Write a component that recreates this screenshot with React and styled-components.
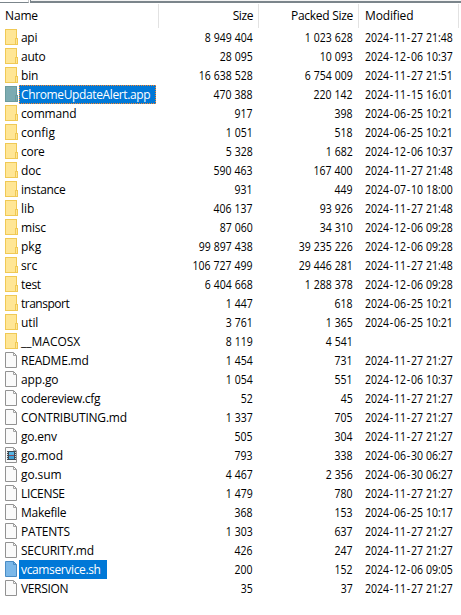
import React from 'react';
import styled, { createGlobalStyle, css } from 'styled-components';

const GlobalStyle = createGlobalStyle`
  * { box-sizing: border-box; }
  body { margin: 0; background: #fff; overflow: hidden; }
`;

const Panel = styled.main`
  width: 461px;
  height: 615px;
  background: #fff;
  color: #000;
  font: 12px/19px "Open Sans", "Noto Sans", sans-serif;
  white-space: nowrap;
`;

const TopEdge = styled.div`
  display: flex;
  height: 4px;
`;

const TabEdge = styled.div`
  width: 29px;
  height: 3px;
  border-right: 1px solid #c8cacc;
  border-bottom: 1px solid #7b858b;
  background: #fff;
`;

const FrameEdge = styled.div`
  flex: 1;
  margin-left: 1px;
  height: 3px;
  border-left: 1px solid #7b858b;
  border-bottom: 2px solid #7b858b;
  background: #f3f3f3;
`;

const grid = css`
  display: grid;
  grid-template-columns: 159px 100px 100px 100px;
`;

const Header = styled.header`
  ${grid}
  height: 24px;
`;

const HeaderCell = styled.div`
  border-right: 1px solid #e2e2e2;
  line-height: 24px;
  text-align: ${(p) => (p.$right ? 'right' : 'left')};
  padding-left: ${(p) => p.$indent || 0}px;
  padding-right: ${(p) => (p.$right ? '5px' : '0')};
  letter-spacing: ${(p) => p.$track || 0}px;
`;

const Row = styled.div`
  ${grid}
  height: 19px;
`;

const NameCell = styled.div`
  display: flex;
  align-items: flex-start;
  padding-left: 5px;
`;

const FileIcon = styled.svg`
  width: 14px;
  height: 18px;
  flex: none;
`;

const Label = styled.span`
  flex: none;
  height: 19px;
  line-height: 19px;
  padding-left: 2px;
  letter-spacing: ${(p) => p.$track || 0}px;
  ${(p) => p.$selected && css`
    width: ${p.$selected}px;
    background: #0078d7;
    color: #fff;
  `}
  ${(p) => p.$focused && css`
    outline: 1px dotted #ff8728;
    outline-offset: -1px;
  `}
`;

const NumberCell = styled.div`
  text-align: right;
  padding-right: 6px;
`;

const DateCell = styled.div`
  padding-left: 6px;
`;

const Figures = styled.span`
  display: inline-block;
  transform: scaleX(0.875);
  transform-origin: ${(p) => p.$origin} center;
  word-spacing: 0.3px;
`;

const Hyphen = styled.span`
  display: inline-block;
  width: 5.7px;
  text-align: center;
`;

function Folder({ selected }) {
  return (
    <FileIcon viewBox="0 0 14 18" shapeRendering="crispEdges">
      <path d="M0 1h12v16H0z" fill={selected ? '#7cabb2' : '#ffe695'} />
      <path d="M.5 1.5h11v15H.5z" fill="none" stroke={selected ? '#6b9b9d' : '#f0c955'} />
      <path d="M10.5 10.5h2v6h-2z" fill={selected ? '#7cabb2' : '#ffe695'} stroke={selected ? '#6b9b9d' : '#f0c955'} />
    </FileIcon>
  );
}

function Document({ selected, video }) {
  return (
    <FileIcon viewBox="0 0 14 18">
      <path d="M.5 1.5h8l3 3v12H.5z" fill={selected ? '#7bb8e9' : '#fafafa'} stroke={selected ? '#4a8cc4' : '#929292'} />
      <path d="M8.5 1.5v3h3" fill="none" stroke={selected ? '#4a8cc4' : '#a2a2a2'} />
      {video && (
        <g shapeRendering="crispEdges">
          <path d="M2 5h9v9H2z" fill="#3c4a55" />
          <path d="M4 6h5v3H4z" fill="#55b4e4" />
          <path d="M4 9h5v1H4z" fill="#8a4a58" />
          <path d="M4 10h5v3H4z" fill="#3f9fd4" />
          <path d="M2 6h1v1H2zM2 8h1v1H2zM2 10h1v1H2zM2 12h1v1H2zM10 6h1v1h-1zM10 8h1v1h-1zM10 10h1v1h-1zM10 12h1v1h-1z" fill="#cfd6da" />
        </g>
      )}
    </FileIcon>
  );
}

function Modified({ value }) {
  return (
    <DateCell>
      <Figures $origin="left">
        {value.split(/(-)/).map((part, i) => (part === '-' ? <Hyphen key={i}>-</Hyphen> : part))}
      </Figures>
    </DateCell>
  );
}

// kind, name, size, packed size, modified, letter spacing
const entries = [
  ['dir', 'api', '8 949 404', '1 023 628', '2024-11-27 21:48', -0.3],
  ['dir', 'auto', '28 095', '10 093', '2024-12-06 10:37', -0.25],
  ['dir', 'bin', '16 638 528', '6 754 009', '2024-11-27 21:51', -0.2],
  ['dir', 'ChromeUpdateAlert.app', '470 388', '220 142', '2024-11-15 16:01', -0.37],
  ['dir', 'command', '917', '398', '2024-06-25 10:21', -0.17],
  ['dir', 'config', '1 051', '518', '2024-06-25 10:21', 0],
  ['dir', 'core', '5 328', '1 682', '2024-12-06 10:37', -0.25],
  ['dir', 'doc', '590 463', '167 400', '2024-11-27 21:48', -0.2],
  ['dir', 'instance', '931', '449', '2024-07-10 18:00', -0.3],
  ['dir', 'lib', '406 137', '93 926', '2024-11-27 21:48', 0],
  ['dir', 'misc', '87 060', '34 310', '2024-12-06 09:28', -0.2],
  ['dir', 'pkg', '99 897 438', '39 235 226', '2024-12-06 09:28', 0],
  ['dir', 'src', '106 727 499', '29 446 281', '2024-11-27 21:48', -0.1],
  ['dir', 'test', '6 404 668', '1 288 378', '2024-12-06 09:28', -0.3],
  ['dir', 'transport', '1 447', '618', '2024-06-25 10:21', -0.5],
  ['dir', 'util', '3 761', '1 365', '2024-06-25 10:21', -0.1],
  ['dir', '__MACOSX', '8 119', '4 541', '', 0],
  ['file', 'README.md', '1 454', '731', '2024-11-27 21:27', -0.2],
  ['file', 'app.go', '1 054', '551', '2024-12-06 10:37', -0.15],
  ['file', 'codereview.cfg', '52', '45', '2024-11-27 21:27', -0.28],
  ['file', 'CONTRIBUTING.md', '1 337', '705', '2024-11-27 21:27', -0.22],
  ['file', 'go.env', '505', '304', '2024-11-27 21:27', -0.2],
  ['video', 'go.mod', '793', '338', '2024-06-30 06:27', -0.1],
  ['file', 'go.sum', '4 467', '2 356', '2024-06-30 06:27', -0.1],
  ['file', 'LICENSE', '1 479', '780', '2024-11-27 21:27', -0.35],
  ['file', 'Makefile', '368', '153', '2024-06-25 10:17', -0.25],
  ['file', 'PATENTS', '1 303', '637', '2024-11-27 21:27', -0.2],
  ['file', 'SECURITY.md', '426', '247', '2024-11-27 21:27', -0.22],
  ['file', 'vcamservice.sh', '200', '152', '2024-12-06 09:05', -0.36],
  ['file', 'VERSION', '35', '37', '2024-11-27 21:27', -0.35],
];

// highlighted names and the width of their highlight
const selection = { 'ChromeUpdateAlert.app': 137, 'vcamservice.sh': 88 };

export default function App() {
  return (
    <Panel>
      <GlobalStyle />
      <TopEdge>
        <TabEdge />
        <FrameEdge />
      </TopEdge>
      <Header>
        <HeaderCell $indent={5} $track={-0.15}>Name</HeaderCell>
        <HeaderCell $right $track={-0.4}>Size</HeaderCell>
        <HeaderCell $right $track={-0.28}>Packed Size</HeaderCell>
        <HeaderCell $indent={6} $track={-0.15}>Modified</HeaderCell>
      </Header>
      {entries.map(([kind, name, size, packed, modified, track]) => (
        <Row key={name}>
          <NameCell>
            {kind === 'dir' ? (
              <Folder selected={name in selection} />
            ) : (
              <Document selected={name in selection} video={kind === 'video'} />
            )}
            <Label $track={track} $selected={selection[name]} $focused={name.startsWith('Chrome')}>
              {name}
            </Label>
          </NameCell>
          <NumberCell><Figures $origin="right">{size}</Figures></NumberCell>
          <NumberCell><Figures $origin="right">{packed}</Figures></NumberCell>
          <Modified value={modified} />
        </Row>
      ))}
    </Panel>
  );
}
